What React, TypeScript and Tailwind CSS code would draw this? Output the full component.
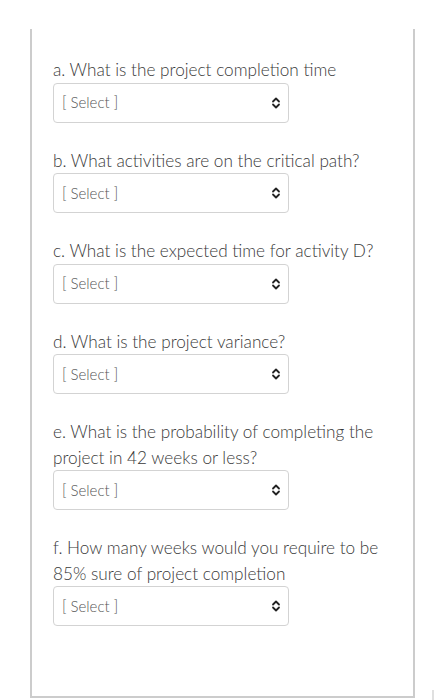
const questions: string[] = [
  'a. What is the project completion time',
  'b. What activities are on the critical path?',
  'c. What is the expected time for activity D?',
  'd. What is the project variance?',
  'e. What is the probability of completing the project in 42 weeks or less?',
  'f. How many weeks would you require to be 85% sure of project completion',
];

function Chevrons() {
  return (
    <svg width="10" height="12" viewBox="0 0 10 12" fill="none" stroke="#222" strokeWidth="1.8" strokeLinecap="round" strokeLinejoin="round">
      <path d="M2 4.5 L5 1.5 L8 4.5" />
      <path d="M2 7.5 L5 10.5 L8 7.5" />
    </svg>
  );
}

function SelectBox() {
  return (
    <div className="flex h-[40px] w-[236px] items-center justify-between rounded-[4px] border border-[#d3d3d3] bg-white pl-[8px] pr-[7px]">
      <span className="text-[15px] font-light text-[#555]">[ Select ]</span>
      <Chevrons />
    </div>
  );
}

export default function App() {
  return (
    <div className="relative h-[700px] w-[446px] bg-white pl-[30px] pt-[29px] font-['Lato','Liberation_Sans',sans-serif]">
      <div className="h-[669px] w-[385px] border-x-2 border-b-2 border-[#cccccc] pl-[21px] pt-[28px]">
        <div className="flex flex-col gap-[25px]">
          {questions.map((q) => (
            <div key={q} className="w-[345px]">
              <p className="text-[17.2px] font-light leading-[25.5px] text-[#3a3a3a]">{q}</p>
              <SelectBox />
            </div>
          ))}
        </div>
      </div>
      <div className="absolute bottom-0 left-[432px] h-[10px] w-[2px] bg-[#e0e0e0]" />
    </div>
  );
}
